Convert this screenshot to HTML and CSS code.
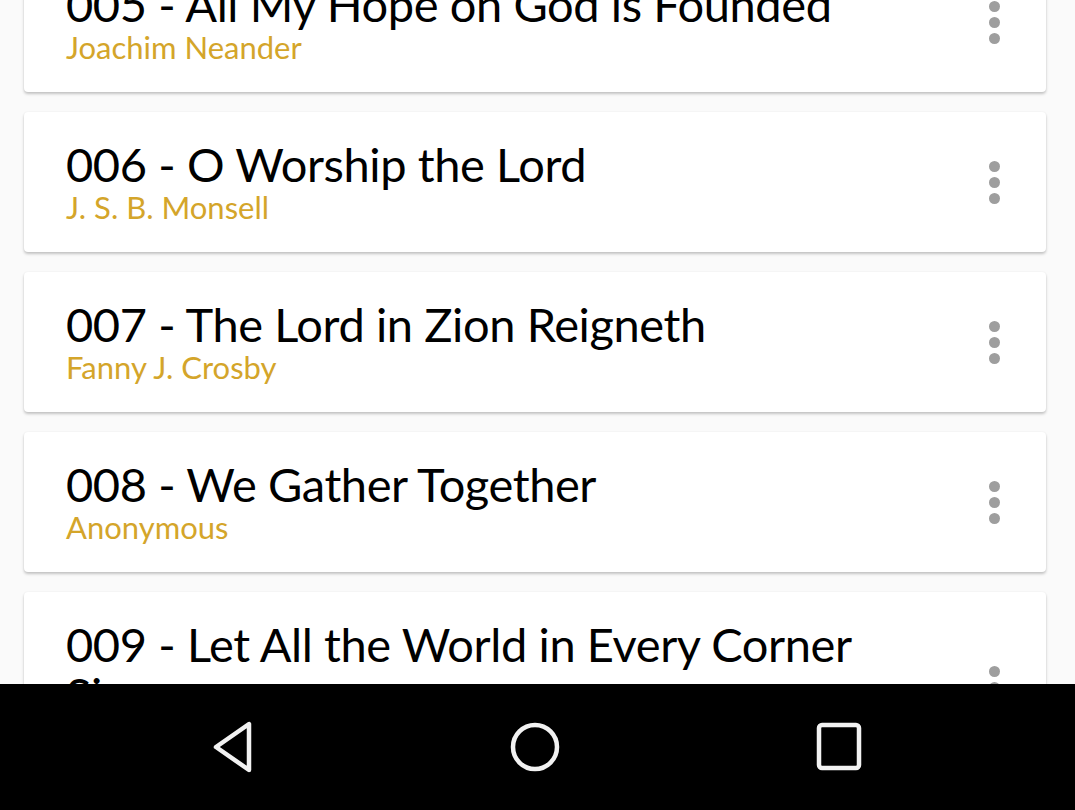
FILE: index.html
```html
<!DOCTYPE html>
<html>
<head>
<meta charset="utf-8">
<link rel="stylesheet" href="styles.css">
</head>
<body>
<div class="screen">
  <div class="viewport">
    <div class="list">
      <div class="card">
        <div class="text">
          <div class="title">005 - All My Hope on God is Founded</div>
          <div class="author">Joachim Neander</div>
        </div>
        <div class="more"><span></span><span></span><span></span></div>
      </div>
      <div class="card">
        <div class="text">
          <div class="title">006 - O Worship the Lord</div>
          <div class="author">J. S. B. Monsell</div>
        </div>
        <div class="more"><span></span><span></span><span></span></div>
      </div>
      <div class="card">
        <div class="text">
          <div class="title">007 - The Lord in Zion Reigneth</div>
          <div class="author">Fanny J. Crosby</div>
        </div>
        <div class="more"><span></span><span></span><span></span></div>
      </div>
      <div class="card">
        <div class="text">
          <div class="title">008 - We Gather Together</div>
          <div class="author">Anonymous</div>
        </div>
        <div class="more"><span></span><span></span><span></span></div>
      </div>
      <div class="card">
        <div class="text">
          <div class="title">009 - Let All the World in Every Corner Sing</div>
          <div class="author">George Herbert</div>
        </div>
        <div class="more"><span></span><span></span><span></span></div>
      </div>
    </div>
  </div>
  <div class="navbar">
    <svg class="nav-icon" width="48" height="54" viewBox="0 0 48 54">
      <path d="M39 4 L39 50 L6 27 Z" fill="none" stroke="#f2f2f2" stroke-width="4.5" stroke-linejoin="round"/>
    </svg>
    <svg class="nav-icon" width="54" height="54" viewBox="0 0 54 54">
      <circle cx="27" cy="27" r="22" fill="none" stroke="#f2f2f2" stroke-width="4.5"/>
    </svg>
    <svg class="nav-icon" width="54" height="54" viewBox="0 0 54 54">
      <rect x="7" y="5" width="40" height="43" rx="3" fill="none" stroke="#f2f2f2" stroke-width="4.5"/>
    </svg>
  </div>
</div>
</body>
</html>
```
FILE: styles.css
```css
html, body {
  margin: 0;
  padding: 0;
  background: #fafafa;
}
.screen {
  width: 1075px;
  height: 810px;
  display: flex;
  flex-direction: column;
  overflow: hidden;
  font-family: Lato, "Open Sans", sans-serif;
}
.viewport {
  height: 684px;
  flex: none;
  overflow: hidden;
  background: #fafafa;
}
.list {
  margin-top: -48px;
  padding: 0 29px 0 24px;
  display: flex;
  flex-direction: column;
  gap: 20px;
}
.card {
  min-height: 140px;
  flex: none;
  background: #fff;
  border-radius: 4px;
  box-shadow: 0 2px 3px rgba(0,0,0,0.22), 0 0 2px rgba(0,0,0,0.06);
  display: flex;
  align-items: center;
  padding: 27px 42px;
  box-sizing: border-box;
}
.text {
  flex: 1;
  display: flex;
  flex-direction: column;
  margin-right: 50px;
}
.title {
  font-size: 47px;
  letter-spacing: -0.4px;
  line-height: 50px;
  color: #000;
}
.author {
  font-size: 31px;
  line-height: 36px;
  color: #d4a52a;
  white-space: nowrap;
}
.more {
  display: flex;
  flex-direction: column;
  gap: 5px;
  margin-right: 4px;
}
.more span {
  width: 11px;
  height: 11px;
  border-radius: 50%;
  background: #9e9e9e;
}
.navbar {
  height: 126px;
  flex: none;
  background: #000;
  display: flex;
  align-items: center;
  justify-content: center;
  gap: 250px;
}
.nav-icon {
  display: block;
}
```
